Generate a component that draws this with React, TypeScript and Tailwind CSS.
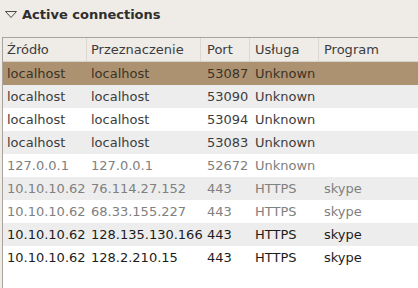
const rows = [
  { src: "localhost", dst: "localhost", port: "53087", svc: "Unknown", prog: "", tone: "sel" },
  { src: "localhost", dst: "localhost", port: "53090", svc: "Unknown", prog: "", tone: "dark" },
  { src: "localhost", dst: "localhost", port: "53094", svc: "Unknown", prog: "", tone: "dark" },
  { src: "localhost", dst: "localhost", port: "53083", svc: "Unknown", prog: "", tone: "dark" },
  { src: "127.0.0.1", dst: "127.0.0.1", port: "52672", svc: "Unknown", prog: "", tone: "dim" },
  { src: "10.10.10.62", dst: "76.114.27.152", port: "443", svc: "HTTPS", prog: "skype", tone: "dim" },
  { src: "10.10.10.62", dst: "68.33.155.227", port: "443", svc: "HTTPS", prog: "skype", tone: "dim" },
  { src: "10.10.10.62", dst: "128.135.130.166", port: "443", svc: "HTTPS", prog: "skype", tone: "black" },
  { src: "10.10.10.62", dst: "128.2.210.15", port: "443", svc: "HTTPS", prog: "skype", tone: "black" },
];

const toneClass: Record<string, string> = {
  sel: "text-[#3a3327]",
  dark: "text-[#3c3c3c]",
  dim: "text-[#808080]",
  black: "text-[#1c1c1c]",
};

const cols = "grid grid-cols-[83px_114px_49px_69px_1fr]";

const App = () => {
  return (
    <div className="w-[418px] h-[288px] bg-[#efebe7] overflow-hidden font-['DejaVu_Sans',sans-serif] text-[13px]">
      {/* Expander title */}
      <div className="h-[37px] flex items-start pt-[6px] pl-[5px] gap-[5px]">
        <svg width="12" height="12" viewBox="0 0 12 12" className="mt-[3px]">
          <path d="M0.5 2.5 L11.5 2.5 L6 8.5 Z" fill="none" stroke="#4a4a48" strokeWidth="1" />
        </svg>
        <span className="font-bold text-[#2e2e2e] leading-[18px]">Active connections</span>
      </div>

      {/* Connections table */}
      <div className="ml-[2px] border-l border-t border-[#a8a39c] bg-white h-[251px]">
        <div className={`${cols} h-[24px] bg-[#efebe7] text-[#3c3c3c] items-center border-b border-[#d6d1ca]`}>
          <div className="pl-[4px]">Źródło</div>
          <div className="pl-[4px] border-l border-[#dcd7d0] h-full flex items-center">Przeznaczenie</div>
          <div className="pl-[6px] border-l border-[#dcd7d0] h-full flex items-center">Port</div>
          <div className="pl-[5px] border-l border-[#dcd7d0] h-full flex items-center">Usługa</div>
          <div className="pl-[5px] border-l border-[#dcd7d0] h-full flex items-center">Program</div>
        </div>
        {rows.map((r, i) => (
          <div
            key={i}
            className={`${cols} h-[23px] items-center ${toneClass[r.tone]} ${
              r.tone === "sel" ? "bg-[#ad9271]" : i % 2 === 1 ? "bg-[#ededed]" : "bg-white"
            }`}
          >
            <div className="pl-[4px] whitespace-nowrap">{r.src}</div>
            <div className="pl-[5px] whitespace-nowrap">{r.dst}</div>
            <div className="pl-[7px]">{r.port}</div>
            <div className="pl-[6px]">{r.svc}</div>
            <div className="pl-[6px]">{r.prog}</div>
          </div>
        ))}
      </div>
    </div>
  );
};

export default App;
